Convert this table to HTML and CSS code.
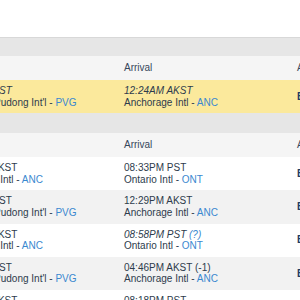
FILE: index.html
```html
<!DOCTYPE html>
<html lang="en">
<head>
<meta charset="utf-8">
<title>Flights</title>
<link rel="stylesheet" href="styles.css">
</head>
<body>
<div class="board">
  <div class="band first"></div>
  <div class="row head">
    <div class="cell">Departure</div>
    <div class="cell">Arrival</div>
    <div class="cell">Aircraft</div>
  </div>
  <div class="row flight active">
    <div class="cell"><em>06:06PM CST</em><br>Shanghai Pudong Int'l - <a href="#">PVG</a></div>
    <div class="cell"><em>12:24AM AKST</em><br>Anchorage Intl - <a href="#">ANC</a></div>
    <div class="cell ac">B744</div>
  </div>
  <div class="band"></div>
  <div class="row head">
    <div class="cell">Departure</div>
    <div class="cell">Arrival</div>
    <div class="cell">Aircraft</div>
  </div>
  <div class="row flight">
    <div class="cell">02:37PM AKST<br>Anchorage Intl - <a href="#">ANC</a></div>
    <div class="cell">08:33PM PST<br>Ontario Intl - <a href="#">ONT</a></div>
    <div class="cell ac">B744</div>
  </div>
  <div class="row flight alt">
    <div class="cell">06:13PM CST<br>Shanghai Pudong Int'l - <a href="#">PVG</a></div>
    <div class="cell">12:29PM AKST<br>Anchorage Intl - <a href="#">ANC</a></div>
    <div class="cell ac">B744</div>
  </div>
  <div class="row flight">
    <div class="cell">02:51PM AKST<br>Anchorage Intl - <a href="#">ANC</a></div>
    <div class="cell"><em>08:58PM PST <a href="#">(?)</a></em><br>Ontario Intl - <a href="#">ONT</a></div>
    <div class="cell ac">B744</div>
  </div>
  <div class="row flight alt">
    <div class="cell">06:20PM CST<br>Shanghai Pudong Int'l - <a href="#">PVG</a></div>
    <div class="cell">04:46PM AKST (-1)<br>Anchorage Intl - <a href="#">ANC</a></div>
    <div class="cell ac">B744</div>
  </div>
  <div class="row flight">
    <div class="cell">02:12PM AKST<br>Anchorage Intl - <a href="#">ANC</a></div>
    <div class="cell">08:18PM PST<br>Ontario Intl - <a href="#">ONT</a></div>
    <div class="cell ac">B744</div>
  </div>
</div>
</body>
</html>
```

FILE: styles.css
```css
html, body {
  margin: 0;
  padding: 0;
  background: #ffffff;
  overflow: hidden;
}

body {
  font-family: "Liberation Sans", Arial, sans-serif;
  font-size: 10px;
  line-height: 11.5px;
  color: #2d3b4c;
}

.board {
  margin-top: 37px;
  margin-left: -55px;
  width: 420px;
}

.band {
  height: 20px;
  background: #e6e6e6;
}

.band.first {
  height: 19px;
  box-sizing: border-box;
  border-top: 1px solid #d8d8d8;
}

.row {
  display: grid;
  grid-template-columns: 175px 173px 1fr;
}

.cell {
  padding-left: 4px;
}

.row.head {
  height: 24px;
  align-items: center;
  background: #f5f5f5;
  color: #36475b;
}

.row.flight {
  padding: 5px 0 5.33px;
  background: #ffffff;
}

.row.flight.alt {
  background: #f2f2f2;
}

.row.flight.active {
  padding: 5px 0;
  background: #fbe99c;
}

.cell.ac {
  align-self: center;
  color: #1e3a63;
  font-weight: bold;
}

a {
  color: #3a88d0;
  text-decoration: none;
}

em {
  font-style: italic;
}
```
